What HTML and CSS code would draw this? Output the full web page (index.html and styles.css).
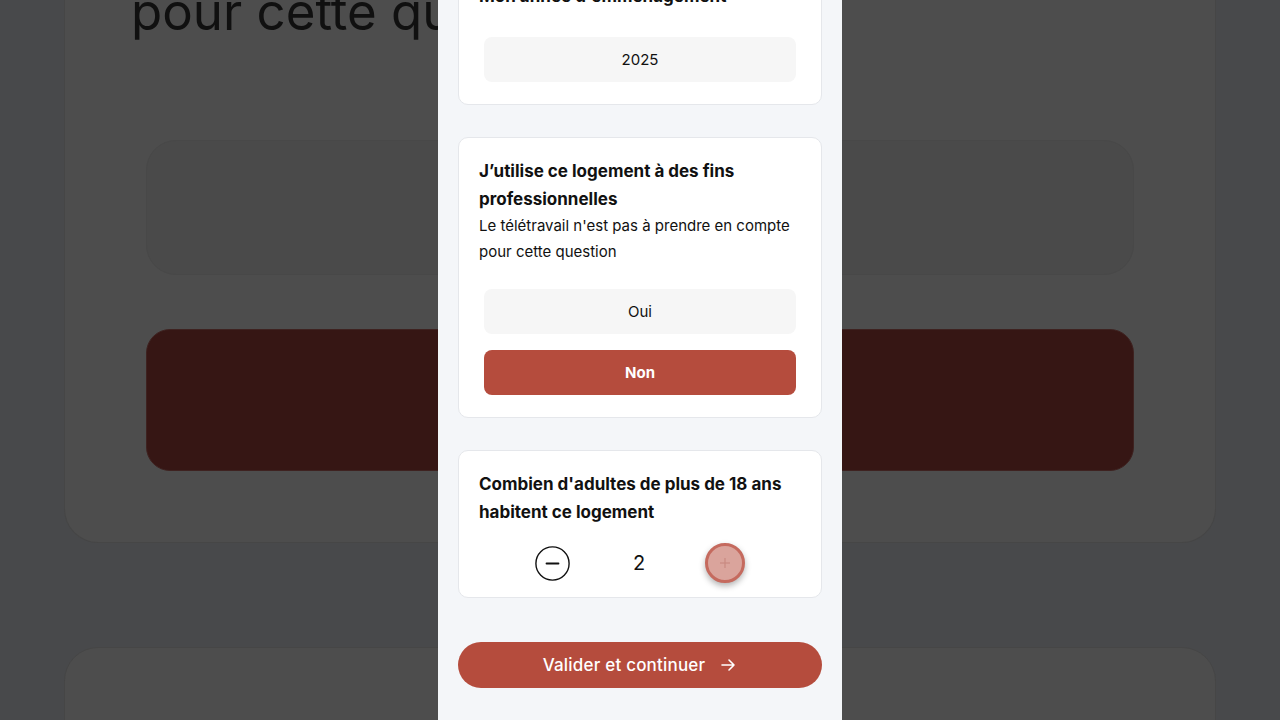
FILE: index.html
```html
<!DOCTYPE html>
<html lang="fr">
<head>
  <meta charset="UTF-8" />
  <meta name="viewport" content="width=device-width, initial-scale=1.0"/>
  <title>Mon logement</title>
  <link rel="stylesheet" href="styles.css">
</head>

<body>
  <!-- Blurred, dimmed copy of the form behind the phone frame -->
  <div class="backdrop" aria-hidden="true">
    <div class="bd-card bd-card-top">
      <p class="bd-text">pour cette question</p>
      <div class="bd-option"></div>
      <div class="bd-option bd-selected"></div>
    </div>
    <div class="bd-card bd-card-next"></div>
  </div>

  <!-- Phone screen -->
  <main class="phone">
    <section class="card card-first">
      <h2 class="question">Mon année d'emménagement</h2>
      <div class="options options-tight">
        <button class="option">2025</button>
      </div>
    </section>

    <section class="card">
      <h2 class="question">J’utilise ce logement à des fins professionnelles</h2>
      <p class="hint">Le télétravail n'est pas à prendre en compte pour cette question</p>
      <div class="options">
        <button class="option">Oui</button>
        <button class="option selected">Non</button>
      </div>
    </section>

    <section class="card">
      <h2 class="question">Combien d'adultes de plus de 18 ans habitent ce logement</h2>
      <div class="counter">
        <button class="count-btn minus" aria-label="Retirer">
          <svg width="35" height="35" viewBox="0 0 35 35">
            <circle cx="17.5" cy="17.5" r="16.6" fill="none" stroke="#111" stroke-width="1.4"/>
            <line x1="11.5" y1="17.5" x2="23.5" y2="17.5" stroke="#111" stroke-width="1.8" stroke-linecap="round"/>
          </svg>
        </button>
        <span class="count-value">2</span>
        <button class="count-btn plus" aria-label="Ajouter">
          <svg width="14" height="14" viewBox="0 0 14 14">
            <line x1="7" y1="2" x2="7" y2="12" stroke="#c98a81" stroke-width="1.2"/>
            <line x1="2" y1="7" x2="12" y2="7" stroke="#c98a81" stroke-width="1.2"/>
          </svg>
        </button>
      </div>
    </section>

    <button class="submit">
      Valider et continuer
      <svg width="18" height="18" viewBox="0 0 18 18">
        <path d="M3 9h12M10 4l5 5-5 5" fill="none" stroke="#fff" stroke-width="1.6" stroke-linecap="round" stroke-linejoin="round"/>
      </svg>
    </button>
  </main>
</body>
</html>
```

FILE: styles.css
```css
body {
  margin: 0;
  height: 720px;
  overflow: hidden;
  font-family: Inter, "Noto Sans", sans-serif;
  color: #111;
  background-color: #48494b;
}

/* ---- background layer ---- */
.backdrop {
  position: fixed;
  inset: 0;
  padding: 0 64px;
  filter: blur(0.6px);
}

.bd-card {
  background-color: #4d4d4d;
  border: 1px solid #464646;
  border-radius: 34px;
}

.bd-card-top {
  margin-top: -20px;
  padding: 0 81px 71px;
  border-top: none;
  border-top-left-radius: 0;
  border-top-right-radius: 0;
}

.bd-text {
  margin: 0 0 0 -15px;
  font-size: 51px;
  line-height: 64px;
  color: #101010;
  white-space: nowrap;
}

.bd-option {
  box-sizing: border-box;
  height: 135px;
  margin-top: 96px;
  border-radius: 30px;
  background-color: #4a4a4a;
  border: 1px solid #484848;
}

.bd-selected {
  height: 142px;
  margin-top: 54px;
  border-radius: 24px;
  background-color: #361614;
  border-color: #3e2220;
}

.bd-card-next {
  margin-top: 104px;
  height: 200px;
}

/* ---- phone screen ---- */
.phone {
  position: relative;
  box-sizing: border-box;
  width: 404px;
  height: 720px;
  margin: 0 auto;
  padding: 0 20px;
  background-color: #f4f6f9;
  display: flex;
  flex-direction: column;
  gap: 32px;
}

.card {
  background-color: #fff;
  border: 1px solid #e5e7eb;
  border-radius: 10px;
  padding: 19px 20px 20px;
}

.card-first {
  margin-top: -38px;
}

.question {
  margin: 0;
  font-size: 17px;
  line-height: 28px;
  font-weight: 700;
}

.hint {
  margin: 0;
  font-size: 15px;
  line-height: 26px;
}

.options {
  display: flex;
  flex-direction: column;
  gap: 16px;
  margin: 24px 5px 2px;
}

.options-tight {
  margin-top: 27px;
}

.option {
  height: 45px;
  border: none;
  border-radius: 8px;
  background-color: #f6f6f6;
  font-family: inherit;
  font-size: 15px;
  color: #111;
}

.option.selected {
  background-color: #b54c3d;
  color: #fff;
  font-weight: 700;
}

.counter {
  display: flex;
  justify-content: center;
  align-items: center;
  margin-top: 17px;
  height: 40px;
  margin-bottom: -6px;
}

.count-btn {
  padding: 0;
  border: none;
  background: none;
  display: flex;
  align-items: center;
  justify-content: center;
}

.count-value {
  font-size: 20px;
  width: 30px;
  margin: 0 51px 0 54px;
  text-align: center;
}

.count-btn.plus {
  box-sizing: border-box;
  width: 40px;
  height: 40px;
  border-radius: 50%;
  background-color: #daa49c;
  border: 3px solid #c56a5e;
  box-shadow: 0 3px 6px rgba(0, 0, 0, 0.3);
}

.submit {
  margin-top: 12px;
  height: 46px;
  border: none;
  border-radius: 23px;
  background-color: #b54c3d;
  color: #fff;
  font-family: inherit;
  font-size: 17px;
  font-weight: 500;
  letter-spacing: 0.2px;
  display: flex;
  align-items: center;
  justify-content: center;
  gap: 14px;
}
```
